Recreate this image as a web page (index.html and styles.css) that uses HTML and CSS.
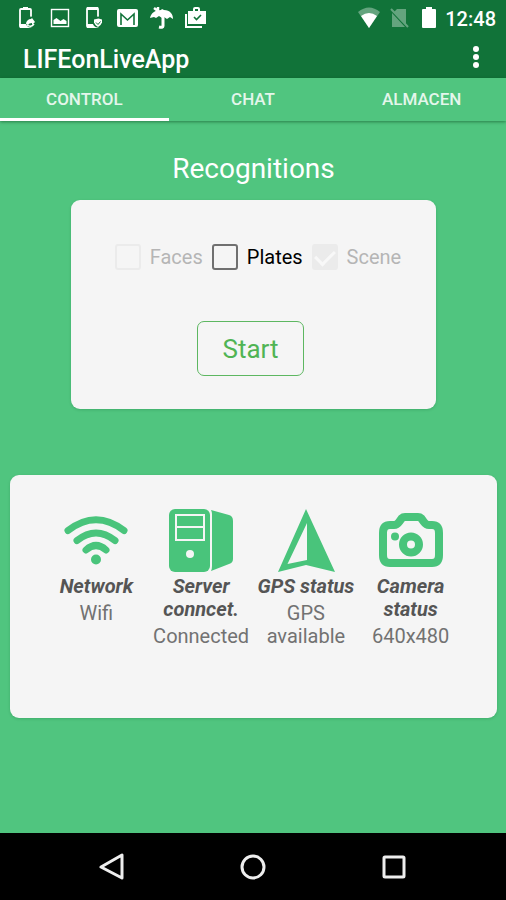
FILE: index.html
```html
<!DOCTYPE html>
<html lang="en">
<head>
<meta charset="utf-8">
<meta name="viewport" content="width=device-width, initial-scale=1">
<title>LIFEonLiveApp</title>
<link rel="stylesheet" href="styles.css">
</head>
<body>
<header class="top">
  <div class="status-bar">
    <div class="notifications">
      <svg class="notice" viewBox="0 0 24 24" aria-hidden="true"><rect x="6" y="3" width="11" height="18" rx="1" fill="none" stroke="currentColor" stroke-width="1.800"/><path d="M9 1h5v3H9zM5 18h8v4H6z" fill="currentColor"/><circle cx="17" cy="16" r="5.500" fill="#117339"/><path d="M12 18a5 5 0 0 1 5-5l1-1 3 4-3 3v-2q-3 0-4 2z" fill="currentColor"/><path d="M13 19q4 3 7-1" fill="none" stroke="currentColor" stroke-width="1.500"/></svg>
      <svg class="notice" viewBox="0 0 24 24" aria-hidden="true"><rect x="3.500" y="3.500" width="17" height="17" fill="none" stroke="currentColor" stroke-width="1.400"/><path d="M5.500 18v-4l3-2 4 3 3-2 3 2v3z" fill="currentColor"/></svg>
      <svg class="notice" viewBox="0 0 24 24" aria-hidden="true"><rect x="5" y="2" width="11" height="19" rx="1" fill="none" stroke="currentColor" stroke-width="1.800"/><path d="M5 1h11v3H5zM5 18h8v4H5z" fill="currentColor"/><circle cx="16" cy="16" r="5.500" fill="#117339"/><path d="M12 13.500l4.500-1 3.500 1v3q-1 3-4 4.500-3-1.500-4-4.500z" fill="currentColor"/><path d="M14 16.500l2 2 2.500-3" fill="none" stroke="#117339"/></svg>
      <svg class="notice" viewBox="0 0 24 24" aria-hidden="true"><rect x="1" y="3" width="21" height="18" rx="2" fill="currentColor"/><path d="M5 19V8l6.500 6L18 8v11" fill="none" stroke="#117339" stroke-width="1.600"/></svg>
      <svg class="notice" viewBox="0 0 24 24" aria-hidden="true"><path d="M0 12C1 7 5 4 11 4l1-1 2 1c6 0 9 4 9 9l-3-2-3 2-3-2-2 1-3-2-3 2-2-1z" fill="currentColor"/><path d="M13 11v9q0 2-4 1" fill="none" stroke="currentColor" stroke-width="3"/><path d="M4 2l4 3V1" fill="none" stroke="currentColor" stroke-width="2.500"/></svg>
      <svg class="notice" viewBox="0 0 24 24" aria-hidden="true"><path d="M2 8v13h16" fill="none" stroke="currentColor" stroke-width="2"/><path d="M4 5h5V3q0-2 2-2h3q2 0 2 2v2h6v13H4zm7 0h3V3h-3z" fill="currentColor" fill-rule="evenodd"/><path d="M10 11l2.500 2.500L17 9" fill="none" stroke="#117339" stroke-width="1.600"/></svg>
    </div>
    <div class="system">
      <div class="signals">
        <svg class="sys" viewBox="0 0 22 22" aria-hidden="true"><path d="M0 5q11-9 22 0L11 21z" fill="currentColor" opacity=".35"/><path d="M3 9q8-6 16 0l-8 12z" fill="currentColor"/></svg>
        <svg class="sys" viewBox="0 0 22 22" aria-hidden="true"><g opacity=".35" fill="currentColor"><path d="M9 2h9v15L6 5zM4 6l13 14H4z"/><path d="M3 2l17 18" stroke="currentColor" stroke-width="2"/></g></svg>
        <svg class="sys" viewBox="0 0 22 22" aria-hidden="true"><path d="M8 0h6v2h3q1 0 1 1v17q0 1-1 1H5q-1 0-1-1V3q0-1 1-1h3z" fill="currentColor"/></svg>
      </div>
      <time class="clock">12:48</time>
    </div>
  </div>
  <div class="app-bar">
    <h1 class="app-title">LIFEonLiveApp</h1>
    <button class="more" type="button" aria-label="More options">
      <svg width="8" height="24" viewBox="0 0 8 24" fill="currentColor"><circle cx="4" cy="4" r="3"/><circle cx="4" cy="12" r="3"/><circle cx="4" cy="20" r="3"/></svg>
    </button>
  </div>
</header>
<nav class="tabs">
  <a class="tab active" href="#control" aria-current="page">CONTROL</a>
  <a class="tab" href="#chat">CHAT</a>
  <a class="tab" href="#almacen">ALMACEN</a>
</nav>
<main class="content" id="control">
  <h2 class="heading">Recognitions</h2>
  <section class="card recognition">
    <div class="options">
      <label class="option"><input type="checkbox" disabled>Faces</label>
      <label class="option"><input type="checkbox">Plates</label>
      <label class="option"><input type="checkbox" checked disabled>Scene</label>
    </div>
    <button class="start" type="button">Start</button>
  </section>
  <section class="card states">
    <article class="state">
      <svg class="state-icon" viewBox="0 0 64 64" aria-hidden="true"><g fill="none" stroke="currentColor" stroke-width="7" stroke-linecap="round"><path d="M4 22.500Q32 1 60 22.500M13 32.500q19-15 38 0M22 42q10-9 20 0"/></g><circle cx="32" cy="51.500" r="5" fill="currentColor"/></svg>
      <h3>Network</h3>
      <p>Wifi</p>
    </article>
    <article class="state">
      <svg class="state-icon" viewBox="0 0 64 64" aria-hidden="true"><rect y="1" width="41" height="63" rx="6" fill="currentColor"/><path d="M42 2l18 5q4 1 4 6v38q0 4-4 5l-18 7q1-2 1-5V6q0-2-1-4z" fill="currentColor"/><path d="M6 6h30v27H6zM8 8v10h26V8zm0 12v11h26V20z" fill="#f5f5f5" fill-rule="evenodd"/><circle cx="21" cy="46" r="4" fill="#f5f5f5"/></svg>
      <h3>Server conncet.</h3>
      <p>Connected</p>
    </article>
    <article class="state">
      <svg class="state-icon" viewBox="0 0 64 64" aria-hidden="true"><path d="M32 1l29 63-29-7-28 7zm1 14L13.500 56 33 52z" fill="currentColor" fill-rule="evenodd"/></svg>
      <h3>GPS status</h3>
      <p>GPS available</p>
    </article>
    <article class="state">
      <svg class="state-icon" viewBox="0 0 64 64" aria-hidden="true"><path d="M11 17h4q3 0 5-3l3-4q1-1 3-1h13q2 0 3 1l3 4q2 3 5 3h3q7 0 7 8v22q0 8-7 8H11q-7 0-7-8V25q0-8 7-8z" fill="none" stroke="currentColor" stroke-width="8"/><circle cx="32" cy="36.500" r="8" fill="none" stroke="currentColor" stroke-width="8"/><circle cx="16" cy="28.500" r="4" fill="currentColor"/></svg>
      <h3>Camera status</h3>
      <p>640x480</p>
    </article>
  </section>
</main>
<footer class="nav-bar">
  <button type="button" aria-label="Back"><svg viewBox="0 0 28 28"><path d="M24 2v23L3 14z"/></svg></button>
  <button type="button" aria-label="Home"><svg viewBox="0 0 28 28"><circle cx="14" cy="14" r="11"/></svg></button>
  <button type="button" aria-label="Recent apps"><svg viewBox="0 0 28 28"><rect x="4" y="4" width="20" height="20" rx="1"/></svg></button>
</footer>
</body>
</html>
```
FILE: styles.css
```css
* {
  box-sizing: border-box;
}

body {
  margin: 0;
  min-height: 100vh;
  display: flex;
  flex-direction: column;
  background: #50c57f;
  color: #fff;
  font-family: Roboto, "Liberation Sans", sans-serif;
}

h1, h2, h3, p {
  margin: 0;
}

button {
  border: 0;
  background: none;
  color: inherit;
  font: inherit;
}

svg {
  display: block;
}

.top {
  background: #117339;
}

.status-bar {
  display: flex;
  justify-content: space-between;
  align-items: center;
  height: 36px;
  padding: 0 10px 0 14px;
}

.notifications {
  display: flex;
  gap: 10px;
}

.notice {
  width: 24px;
  height: 24px;
}

.system {
  display: flex;
  align-items: center;
  gap: 5px;
}

.signals {
  display: flex;
  gap: 8px;
}

.sys {
  width: 22px;
  height: 22px;
}

.clock {
  font-size: 20px;
  font-weight: 500;
  line-height: 24px;
  padding-top: 2px;
}

.app-bar {
  display: flex;
  justify-content: space-between;
  align-items: center;
  height: 42px;
  padding: 0 18px 0 23px;
}

.app-title {
  font-size: 25px;
  font-weight: 500;
  line-height: 36px;
  padding-top: 6px;
}

.more {
  display: flex;
  justify-content: center;
  width: 24px;
  padding: 0;
}

.tabs {
  display: grid;
  grid-template-columns: repeat(3, 1fr);
  box-shadow: 0 1px 3px rgba(0, 60, 20, 0.5);
}

.tab {
  height: 43px;
  border-bottom: 3px solid transparent;
  color: #e4f6eb;
  font-size: 17px;
  font-weight: 500;
  line-height: 43px;
  text-align: center;
  text-decoration: none;
}

.tab.active {
  border-color: #fff;
}

.content {
  flex: 1;
  padding: 28px 9px 0 10px;
}

.heading {
  font-size: 28px;
  font-weight: 400;
  line-height: 40px;
  text-align: center;
}

.card {
  border-radius: 9px;
  background: #f5f5f5;
  box-shadow: 0 1px 3px rgba(0, 80, 30, 0.2);
}

.recognition {
  display: flex;
  flex-direction: column;
  align-items: center;
  margin: 11px 61px 0;
  padding: 43px 6px 33px 0;
}

.options {
  display: flex;
  gap: 9px;
  padding-left: 15px;
}

.option {
  display: flex;
  align-items: center;
  gap: 9px;
  color: #000;
  font-size: 20px;
  line-height: 28px;
}

.option:has(:disabled) {
  color: #b5b5b5;
}

.option input {
  appearance: none;
  width: 26px;
  height: 26px;
  margin: 0;
  border: 2px solid #707070;
  border-radius: 3px;
}

.option input:disabled {
  border-color: #ebebeb;
}

.option input:checked {
  background: #ebebeb;
}

.option input:checked::after {
  content: "";
  display: block;
  width: 9px;
  height: 16px;
  margin: 0 auto;
  border: solid #f8f8f8;
  border-width: 0 3px 3px 0;
  transform: rotate(45deg);
}

.start {
  margin-top: 50px;
  padding: 2px 24px 0;
  border: 1px solid #5db761;
  border-radius: 7px;
  color: #50b454;
  font-size: 26px;
  line-height: 51px;
}

.states {
  display: grid;
  grid-template-columns: repeat(4, 1fr);
  min-height: 243px;
  margin-top: 66px;
  padding: 33px 34px;
}

.state {
  display: flex;
  flex-direction: column;
  align-items: center;
  color: #727272;
  font-size: 20px;
  line-height: 23px;
  text-align: center;
}

.state-icon {
  width: 64px;
  height: 64px;
  margin-bottom: 3px;
  color: #49c47b;
}

.state h3 {
  margin-bottom: 4px;
  color: #555;
  font-size: 20px;
  font-style: italic;
  font-weight: 700;
}

.nav-bar {
  display: flex;
  justify-content: center;
  gap: 113px;
  padding: 20px 0 19px;
  background: #000;
}

.nav-bar button {
  padding: 0;
}

.nav-bar svg {
  width: 28px;
  height: 28px;
  fill: none;
  stroke: #eee;
  stroke-width: 3;
  stroke-linejoin: round;
}
```
